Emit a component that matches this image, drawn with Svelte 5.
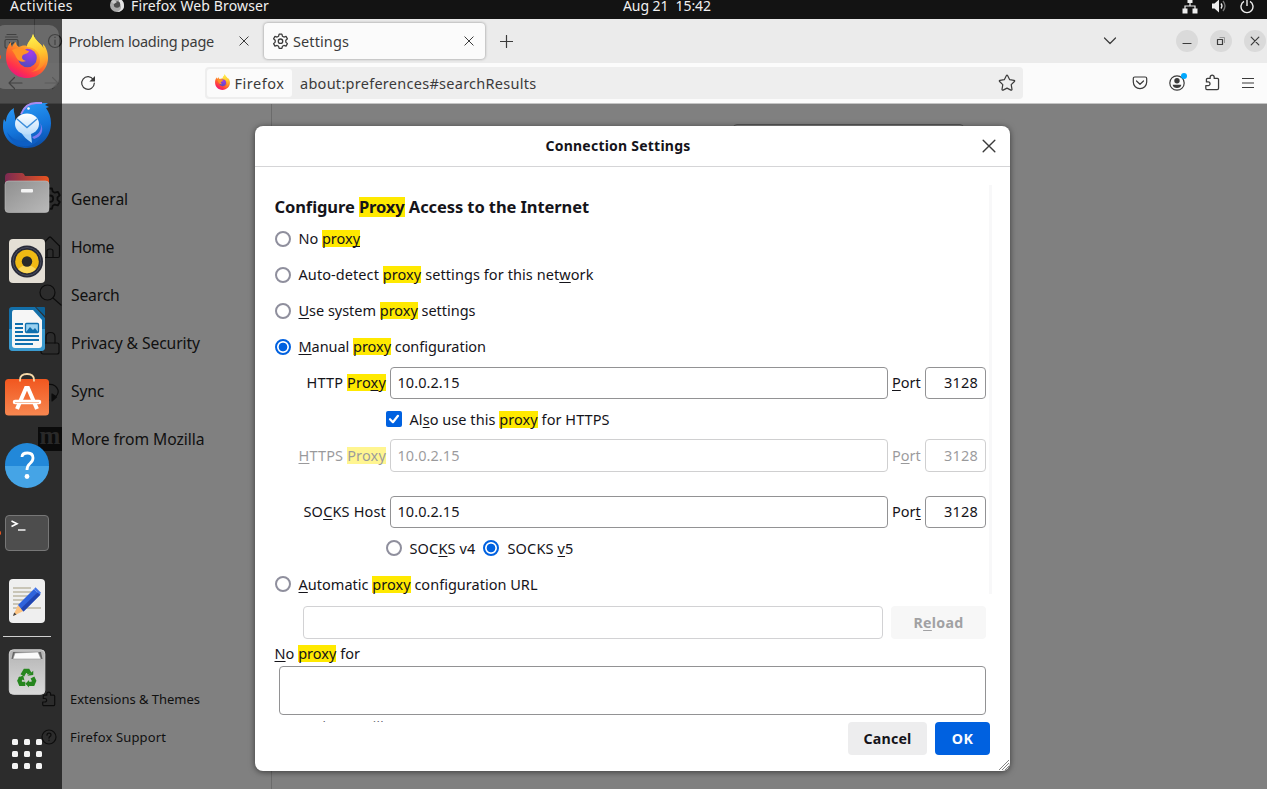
<script>
  // Spreads a label evenly over the width reserved for it.
  function fit(node, width) {
    const natural = node.getBoundingClientRect().width;
    node.style.letterSpacing = (width - natural) / node.textContent.length + 'px';
  }

  const nav = [
    { label: 'General', width: 57, icon: 'gear' },
    { label: 'Home', width: 43, icon: 'home' },
    { label: 'Search', width: 48.5, icon: 'search' },
    { label: 'Privacy & Security', width: 129, icon: 'lock' },
    { label: 'Sync', width: 33, icon: 'sync' },
    { label: 'More from Mozilla', width: 133.5, icon: 'mozilla' }
  ];
  const dots = [13, 25, 37];
</script>

{#snippet firefox(size)}
  <svg width={size} height={size} viewBox="0 0 48 48">
    <defs>
      <linearGradient id="fxBody" x1=".8" y1="0" x2=".25" y2="1">
        <stop offset="0" stop-color="#fff04a" /><stop offset=".3" stop-color="#ffb52e" />
        <stop offset=".58" stop-color="#ff6a2b" /><stop offset=".82" stop-color="#ff2f4e" /><stop offset="1" stop-color="#e31587" />
      </linearGradient>
      <linearGradient id="fxFlame" x1=".5" y1="0" x2=".6" y2="1">
        <stop offset="0" stop-color="#fff44f" /><stop offset=".5" stop-color="#ffc42e" /><stop offset="1" stop-color="#ff7a25" />
      </linearGradient>
      <radialGradient id="fxGlobe" cx=".65" cy=".2" r=".9">
        <stop offset="0" stop-color="#a53bea" /><stop offset=".5" stop-color="#7543d8" /><stop offset="1" stop-color="#4a4fb5" />
      </radialGradient>
    </defs>
    <path fill="url(#fxBody)" d="M30 1c-1 5-5 8-6 12-3-1-6 0-8 1-2-1-3-3-3-5-2 1-3 3-4 5-1-1-1-3-1-5C4 13 3 18 3 24c0 12 9 21 21 21s21-9 21-20c0-6-2-11-5-14 0 2 0 3 1 5-3-6-9-8-11-15z" />
    <path fill="url(#fxFlame)" d="M30 1c-1 5-6 8-6 13 7 0 13 5 13 13 0 6-4 10-9 12 10-1 15-8 15-15 0-4-1-7-2-8-3-6-9-8-11-15z" />
    <circle cx="24.500" cy="25" r="9.300" fill="url(#fxGlobe)" />
    <path fill="#ff9327" d="M9 17c4-2 9-3 13-1 1 1 2 2 4 2 0 2-4 3-6 4-2 2-1 5 3 6-4 2-8 0-10-4-1-3-3-5-4-7z" />
  </svg>
{/snippet}

{#snippet gear(size)}
  <svg width={size} height={size} viewBox="0 0 16 16" class="line">
    <path d="M6.700 1h2.600l.5 2 1.400.8 2-.6 1.300 2.300-1.500 1.400v1.700l1.500 1.400-1.300 2.300-2-.6-1.400.8-.5 2H6.700l-.5-2-1.400-.8-2 .6L1.500 10 3 8.600V6.900L1.500 5.500l1.300-2.300 2 .6L6.200 3z" />
    <circle cx="8" cy="7.750" r="2.100" />
  </svg>
{/snippet}

{#snippet puzzle(size)}
  <svg width={size} height={size} viewBox="0 0 16 16" class="line">
    <path d="M2.600 14.700h9.800q1.300 0 1.300-1.300V5.200q0-1-1-1H9.600V3a1.900 1.900 0 0 0-3.800 0v1.200H3.300q-1 0-1 1v2.300h1.600a1.700 1.700 0 0 1 0 3.500H1.700v2.500q0 1.200 1 1.200z" />
  </svg>
{/snippet}

{#snippet close(size)}
  <svg width={size} height={size} viewBox="0 0 12 12" class="line"><path d="M1 1l10 10M11 1L1 11" /></svg>
{/snippet}

<div class="screen">
  <header class="topbar">
    <span use:fit={63}>Activities</span>
    <svg class="app" width="16" height="16" viewBox="0 0 16 16">
      <circle cx="8" cy="8" r="7" fill="#aaa" /><path d="M10 1c3 2 5 4 5 8s-4 6-7 6c5-2 5-6 2-9z" fill="#e3e3e3" /><circle cx="8" cy="7.500" r="3.200" fill="#4d4d4d" /><path d="M2 4l3-1 3 2-3 2z" fill="#c9c9c9" />
    </svg>
    <span use:fit={138}>Firefox Web Browser</span>
    <span class="clock" use:fit={88}>Aug 21&nbsp; 15:42</span>
    <svg class="net" width="16" height="16" viewBox="0 0 16 16" fill="#eee"><path d="M5.500 0h5v5h-5zM.5 10.500h5v5h-5zM10.500 10.500h5v5h-5z" /><path d="M8 4v4M3 11V8h10v3" fill="none" stroke="#eee" stroke-width="1.200" /></svg>
    <svg class="vol" width="16" height="16" viewBox="0 0 16 16" fill="#eee"><path d="M1 5.500h2.500L8 1.500v13l-4.500-4H1z" /><path d="M10 5.500q2 2.500 0 5" fill="none" stroke="#eee" stroke-width="1.300" /><path d="M12 3q4 5 0 10" fill="none" stroke="#777" stroke-width="1.300" /></svg>
    <svg class="pow" width="16" height="16" viewBox="0 0 16 16" fill="none" stroke="#eee" stroke-width="1.400"><path d="M5 3.400a6 6 0 1 0 6 0M8 1v7" /></svg>
  </header>

  <section class="tabs">
    <svg class="view" width="17" height="16" viewBox="0 0 17 16"><g class="line"><path d="M4 1.500h9M2.500 4h12" /><rect x="2" y="6.500" width="13" height="8.500" rx="1.500" /><path d="M6.500 9.500l2 2 2-2" /></g></svg>
    <i class="sep"></i>
    <svg class="info" width="16" height="16" viewBox="0 0 16 16"><g class="line"><circle cx="8" cy="8" r="6.500" /><path d="M8 7v4.500M8 4v.5" /></g></svg>
    <span class="title" use:fit={145.5}>Problem loading page</span>
    <span class="x">{@render close(10)}</span>
    <div class="tab">
      {@render gear(17)}
      <span use:fit={56}>Settings</span>
      <span class="x">{@render close(10)}</span>
    </div>
    <svg class="plus" width="13" height="13" viewBox="0 0 13 13"><path class="line" d="M6.500 .5v12M.5 6.500h12" /></svg>
    <svg class="chev" width="14" height="8" viewBox="0 0 14 8"><path class="line" d="M1.500 1L7 6.500 12.500 1" /></svg>
    <div class="wins">
      <span><svg width="10" height="10" viewBox="0 0 10 10"><path class="line" d="M1 7.500h8" /></svg></span>
      <span><svg width="10" height="10" viewBox="0 0 10 10"><path d="M3.500 1.500H8.500V7" fill="none" stroke="#999" /><rect class="line" x="1.500" y="3.500" width="5" height="5" /></svg></span>
      <span><svg width="10" height="10" viewBox="0 0 10 10"><path class="line" d="M1.200 1.200l7.600 7.600M8.800 1.200L1.200 8.800" /></svg></span>
    </div>
  </section>

  <section class="toolbar">
    <svg class="back" width="15" height="14" viewBox="0 0 15 14"><path class="line" d="M14 7H1M6.500 1.500L1 7l5.500 5.500" /></svg>
    <svg class="fwd" width="15" height="14" viewBox="0 0 15 14" opacity=".4"><path class="line" d="M1 7h13M8.500 1.500L14 7l-5.500 5.500" /></svg>
    <svg class="reload" width="16" height="16" viewBox="0 0 16 16"><path class="line" d="M13.300 4.600A6.300 6.300 0 1 0 14.300 8.200" /><path d="M15 1v5.600H9.400z" fill="#3b3b3b" /></svg>
    <div class="url">
      <div class="ident">{@render firefox(17)}<span use:fit={50}>Firefox</span></div>
      <span class="addr" use:fit={236.5}>about:preferences#searchResults</span>
      <svg class="star" width="18" height="18" viewBox="0 0 18 18"><path class="line" d="M8.300 1.700q.7-1.200 1.400 0l2 4 4.300.6q1.200.3.400 1.200L13.200 10.700l.8 4.600q0 1.200-1.100.8L9 14.100l-3.900 2q-1.100.4-1.100-.8l.8-4.600L1.600 7.500q-.8-.9.400-1.200l4.300-.6z" /></svg>
    </div>
    <svg class="pocket" width="16" height="16" viewBox="0 0 16 16"><g class="line"><path d="M2.800 2h10.400q1.500 0 1.500 1.500V7a6.700 6.700 0 0 1-13.400 0V3.500Q1.300 2 2.800 2z" /><path d="M4.500 6L8 9.300 11.500 6" /></g></svg>
    <div class="acct">
      <svg width="16" height="16" viewBox="0 0 16 16"><circle class="line" cx="8" cy="8" r="7.200" /><circle cx="8" cy="5.700" r="2.700" fill="#3b3b3b" /><path d="M3.700 9.800h8.600q-.5 3.200-4.300 3.200t-4.300-3.200z" fill="#3b3b3b" /></svg>
      <i></i>
    </div>
    <span class="ext">{@render puzzle(17)}</span>
    <svg class="menu" width="12" height="12" viewBox="0 0 12 12"><path class="line" d="M0 1.500h12M0 6h12M0 10.500h12" /></svg>
  </section>

  <main>
    <aside>
      <ul class="nav">
        {#each nav as item}
          <li>
            {#if item.icon === 'gear'}
              {@render gear(24)}
            {:else if item.icon === 'mozilla'}
              <b class="moz">m</b>
            {:else}
              <svg width="24" height="24" viewBox="0 0 24 24"><g class="line">
                {#if item.icon === 'home'}<path d="M3 11l8-8.500q1-1 2 0l8.500 8.500M4.500 10v11q0 1.500 1.500 1.500h14q1.500 0 1.500-1.500V10.500M9 22v-6q0-2 3-2t3 2v6" />
                {:else if item.icon === 'search'}<circle cx="9.500" cy="9.500" r="7.500" /><path d="M15 15l8 7" />
                {:else if item.icon === 'lock'}<rect x="3" y="12" width="18" height="11" rx="2" /><path d="M8 12V6q0-4.500 4.500-4.500T17 6v6" />
                {:else}<path d="M3 12a9 9 0 0 1 17-1q1 4-3 7M3 16q3 5 8 5" /><path d="M14 15v7l4.500-4z" fill="#111" />{/if}
              </g></svg>
            {/if}
            <span use:fit={item.width}>{item.label}</span>
          </li>
        {/each}
      </ul>
      <ul class="more">
        <li>{@render puzzle(16)}<span use:fit={130}>Extensions &amp; Themes</span></li>
        <li><svg width="16" height="16" viewBox="0 0 16 16"><g class="line"><circle cx="8" cy="8" r="7" /><path d="M6 6.200q0-2 2-2t2 1.800q0 1-1.200 1.600Q8 8 8 9.200M8 11v.6" /></g></svg><span use:fit={96}>Firefox Support</span></li>
      </ul>
    </aside>
    <div class="pane"><div class="find"></div></div>
  </main>

  <nav class="dock">
    <div class="cell active">{@render firefox(48)}</div>
    <div class="cell">
      <svg width="48" height="48" viewBox="0 0 48 48">
        <defs>
          <linearGradient id="tb" x1=".3" y1="0" x2=".6" y2="1"><stop offset="0" stop-color="#2a9af5" /><stop offset=".6" stop-color="#1373d9" /><stop offset="1" stop-color="#0b4ea8" /></linearGradient>
          <linearGradient id="env" x1="0" y1="0" x2="0" y2="1"><stop offset="0" stop-color="#fff" /><stop offset="1" stop-color="#b9dcfa" /></linearGradient>
        </defs>
        <path fill="url(#tb)" d="M18 13C20 5 27 1 33 2h12l-3 2 4 2-3 1c3 4 5 9 5 15 0 14-10 25-24 25S1 38 0 27c0-4 0-6 1-9l2 3c0-6 3-11 8-14-1 4 2 8 1 12z" />
        <path fill="none" stroke="#a98bf0" stroke-width="1.800" d="M18 13C21 6 26 2 33 2h6" />
        <path fill="#0d5ec4" d="M4 31c8 12 25 13 37 0-5 11-13 15-21 14S6 38 4 31z" />
        <path fill="#7b7bf0" d="M29 36c7-2 11-8 8-14 5 7 1 14-6 16z" />
        <path d="M18 31q3 6 11 11l-1-9z" fill="#a9d4fa" />
        <ellipse cx="24" cy="23" rx="12" ry="10.500" fill="url(#env)" />
        <path fill="none" stroke="#3c8edb" stroke-width="1.400" d="M14 18l10 8.500 10-8.500" />
        <circle cx="25.500" cy="7.500" r="1.300" fill="#fff" />
      </svg>
    </div>
    <div class="cell">
      <svg width="48" height="48" viewBox="0 0 48 48">
        <defs>
          <linearGradient id="fold"><stop offset="0" stop-color="#7c2a52" /><stop offset="1" stop-color="#e9541f" /></linearGradient>
          <linearGradient id="grey" x2="1" y2="1"><stop offset="0" stop-color="#8f8f8f" /><stop offset="1" stop-color="#b9b9b9" /></linearGradient>
        </defs>
        <path fill="url(#fold)" d="M2 8q0-4 4-4h13q2 0 3 3h20q4 0 4 4v15H2z" />
        <rect x="2" y="12" width="44" height="31.500" rx="3.500" fill="url(#grey)" stroke="#c0c0c0" stroke-width=".6" />
        <rect x="18" y="20" width="12" height="3.500" rx="1" fill="#f4f4f4" />
      </svg>
    </div>
    <div class="cell">
      <svg width="48" height="48" viewBox="0 0 48 48">
        <rect x="6" y="2" width="36" height="44" rx="4" fill="#e4dfd5" />
        <circle cx="24" cy="24.500" r="16" fill="#282a38" /><circle cx="24" cy="24.500" r="14" fill="none" stroke="#4a4e5e" />
        <circle cx="24" cy="24.500" r="11.800" fill="#efb914" /><path d="M15 32a11.800 11.800 0 0 0 18 0l-9-6z" fill="#fbd75a" />
        <circle cx="24" cy="24.500" r="5.200" fill="#292929" />
      </svg>
    </div>
    <div class="cell">
      <svg width="48" height="48" viewBox="0 0 48 48">
        <path d="M9 2h23l10 11v29q0 4-4 4H10q-4 0-4-4V5q0-3 3-3z" fill="#136fa9" />
        <path d="M6 24h36v18q0 4-4 4H10q-4 0-4-4z" fill="#3b9bd0" />
        <path d="M11 5h19l9 10v25q0 3-3 3H12q-3 0-3-3V8q0-3 2-3z" fill="#f6f6f6" />
        <path d="M33 2h8q1 0 1 1v8z" fill="#0d6094" />
        <path d="M12 19h8M12 23h8M12 27h8M12 31h24M12 35h24M12 39h18" stroke="#0f6fae" stroke-width="1.800" />
        <rect x="22.500" y="18.500" width="13" height="9" rx="1" fill="#9ad1f0" stroke="#0f6fae" stroke-width="1.300" />
        <path d="M23 27l4-5 3 3 2-2 3 4z" fill="#0f6fae" />
      </svg>
    </div>
    <div class="cell">
      <svg width="48" height="48" viewBox="0 0 48 48">
        <defs><linearGradient id="bag" x2="0" y2="1"><stop offset="0" stop-color="#f1571f" /><stop offset="1" stop-color="#f78750" /></linearGradient></defs>
        <rect x="2" y="6" width="44" height="36.500" rx="3.500" fill="url(#bag)" />
        <path d="M17 8.500V7q0-6 7-6t7 6v1.500" fill="none" stroke="#f7d9a8" stroke-width="1.800" />
        <path d="M14 36l9-21h2l9 21" fill="none" stroke="#fff" stroke-width="4" />
        <path d="M12 29h24" stroke="#fff" stroke-width="4.500" stroke-linecap="round" /><path d="M12 29.500h24" stroke="#f7bea0" stroke-width="1" />
      </svg>
    </div>
    <div class="cell help">
      <svg width="48" height="48" viewBox="0 0 48 48">
        <circle cx="24" cy="24" r="22" fill="#2288d9" /><path d="M2 25h44a22 22 0 0 1-44 0z" fill="#45a4e6" />
        <path d="M19 16q0-4 5.500-4T30 17q0 3-3 5.500T24 29" fill="none" stroke="#fff" stroke-width="2.800" /><circle cx="24" cy="35.500" r="2.400" fill="#fff" />
      </svg>
    </div>
    <div class="cell term">
      <svg width="48" height="48" viewBox="0 0 48 48">
        <rect x="2.500" y="6.500" width="43" height="35" rx="3.500" fill="#4d4d4d" stroke="#777" />
        <path d="M8.500 12l5.500 2.800-5.500 2.700" fill="none" stroke="#fff" stroke-width="1.600" /><path d="M15 21h7.500" stroke="#fff" stroke-width="1.400" />
      </svg>
    </div>
    <div class="cell">
      <svg width="48" height="48" viewBox="0 0 48 48">
        <rect x="6" y="2" width="36" height="44" rx="4" fill="#efefef" />
        <path d="M10 11h18M10 15h22M10 19h20M10 23h16M10 27h12M10 31h28" stroke="#c9c5b7" stroke-width="2" />
        <path d="M10 39l5-11 5.500 6z" fill="#fcc381" /><path d="M10 39l1.200-3.500 2.300 2z" fill="#444" />
        <path d="M15 28L31 12l6 6-16.500 16.500z" fill="#2f63dc" /><path d="M18 31.500L35 15l2.500 2.500L20.500 34.500z" fill="#2044b0" /><path d="M31 12l1.500-1.800 5.500 5.500-1.300 1.800z" fill="#4173e6" />
      </svg>
    </div>
    <i class="rule"></i>
    <div class="cell trash">
      <svg width="48" height="48" viewBox="0 0 48 48">
        <defs><linearGradient id="bin" x2="0" y2="1"><stop offset="0" stop-color="#b4b4b4" /><stop offset="1" stop-color="#dadada" /></linearGradient></defs>
        <rect x="6.300" y="1.800" width="35.500" height="44.500" rx="4" fill="url(#bin)" stroke="#d6d6d6" />
        <path d="M10 4h28l1.500 7h-31z" fill="#666" /><path d="M12 5l23-1 3 7H10z" fill="#fafafa" stroke="#999" stroke-width=".6" />
        <g transform="translate(3.400 6) scale(.84)">
          <g fill="none" stroke="#26861e" stroke-width="5"><path d="M19 25.500l3.200-5.500h3.500l2 3.500" /><path d="M31 28l2 4-1.500 3.500H26" /><path d="M22.500 35.500H17L15.500 32l2-4" /></g>
          <g fill="#26861e"><path d="M25 26l7-1v-5z" /><path d="M27 31v9l-4.500-4.500z" /><path d="M14 28l6-2.500 1.500 6z" /></g>
        </g>
      </svg>
    </div>
    <div class="cell apps">
      <svg width="48" height="48" viewBox="0 0 48 48">
        {#each dots as y}{#each dots as x}<rect x={x - 4} y={y - 4} width="6" height="6" rx="1.500" fill="#f4f4f4" />{/each}{/each}
      </svg>
    </div>
  </nav>

  <div class="dialog">
    <header><b use:fit={145}>Connection Settings</b><span>{@render close(14)}</span></header>
    <div class="body">
      <h2><span use:fit={314.5}>Configure <mark>Proxy</mark> Access to the Internet</span></h2>
      <label class="opt"><i class="radio"></i><span use:fit={61.5}>No <mark>prox<u>y</u></mark></span></label>
      <label class="opt"><i class="radio"></i><span use:fit={295}>Auto-detect <mark>proxy</mark> settings for this net<u>w</u>ork</span></label>
      <label class="opt"><i class="radio"></i><span use:fit={177}><u>U</u>se system <mark>proxy</mark> settings</span></label>
      <label class="opt"><i class="radio on"></i><span use:fit={187.5}><u>M</u>anual <mark>proxy</mark> configuration</span></label>
      <div class="row http">
        <span class="name"><span use:fit={79.5}>HTTP <mark>Pro<u>x</u>y</mark></span></span>
        <div class="box host"><span use:fit={62}>10.0.2.15</span></div>
        <span class="port" use:fit={29}><u>P</u>ort</span>
        <div class="box num"><span use:fit={34}>3128</span></div>
      </div>
      <label class="opt sub tall"><i class="check"><svg width="16" height="16" viewBox="0 0 16 16"><path d="M4 8.200l2.900 3L12 4.800" fill="none" stroke="#fff" stroke-width="2.200" stroke-linecap="round" stroke-linejoin="round" /></svg></i><span use:fit={200}>Al<u>s</u>o use this <mark>proxy</mark> for HTTPS</span></label>
      <div class="row https off">
        <span class="name"><span use:fit={87.5}><u>H</u>TTPS <mark>Proxy</mark></span></span>
        <div class="box host"><span use:fit={62}>10.0.2.15</span></div>
        <span class="port" use:fit={29}>P<u>o</u>rt</span>
        <div class="box num"><span use:fit={34}>3128</span></div>
      </div>
      <div class="row socks">
        <span class="name"><span use:fit={82.5}>SO<u>C</u>KS Host</span></span>
        <div class="box host"><span use:fit={62}>10.0.2.15</span></div>
        <span class="port" use:fit={29}>Por<u>t</u></span>
        <div class="box num"><span use:fit={34}>3128</span></div>
      </div>
      <div class="opt sub tall">
        <i class="radio"></i><span use:fit={66}>SOC<u>K</u>S v4</span>
        <i class="radio on second"></i><span class="v5" use:fit={66}>SOCKS <u>v</u>5</span>
      </div>
      <label class="opt auto"><i class="radio"></i><span use:fit={239}><u>A</u>utomatic <mark>proxy</mark> configuration URL</span></label>
      <div class="pac"><div class="box dim"></div><button class="reloadbtn" disabled><span use:fit={50}>R<u>e</u>load</span></button></div>
      <div class="except"><span use:fit={85.5}><u>N</u>o <mark>proxy</mark> for</span></div>
      <div class="box area"></div>
      <p class="hint"><span use:fit={293}>Example: .mozilla.org, .net.nz, 192.168.1.0/24</span></p>
      <i class="scroll"></i>
    </div>
    <footer><button><span use:fit={48}>Cancel</span></button><button class="ok"><span use:fit={21.5}>OK</span></button></footer>
    <svg class="grip" width="12" height="12" viewBox="0 0 12 12" stroke="#777" stroke-width=".9"><path d="M1 11L11 1M4 11l7-7M7 11l4-4M9.500 11.500l2-2" /></svg>
  </div>
</div>

<style>
  :global(body) { overflow: hidden; }
  * { box-sizing: border-box; }
  .screen { position: relative; display: flex; flex-direction: column; width: 1267px; height: 789px; overflow: hidden; background: #808080; font: 14.5px/20px 'Noto Sans', 'Open Sans', sans-serif; color: #15141a; }
  .screen span, b { white-space: pre; }
  svg { flex: none; display: block; }
  .line { fill: none; stroke: #3b3b3b; stroke-width: 1.2; stroke-linejoin: round; stroke-linecap: round; }
  ul { list-style: none; margin: 0; padding: 0; }

  .topbar { display: flex; align-items: center; height: 19px; padding: 0 12px 8px 10px; background: #131313; color: #f0f0f0; font-size: 14px; line-height: 11px; }
  .app { margin: -2px 5px 0 36px; }
  .app + span { margin-left: 1px; }
  .clock { margin-left: 354px; }
  .net { margin-left: auto; }
  .vol { margin-left: 13px; }
  .pow { margin-left: 12px; }

  .tabs { display: flex; align-items: center; height: 44px; padding-left: 3px; background: #ebebeb; color: #3b3b3b; }
  .sep { width: 1px; height: 44px; margin: 0 12px 0 14px; background: #aaa; }
  .title { margin-left: 5.5px; }
  .x { display: flex; margin-left: 24.5px; }
  .tab { display: flex; align-items: center; width: 221px; height: 36px; margin-left: 15.5px; padding-left: 7.5px; border-radius: 4px; background: #fbfbfb; box-shadow: 0 0 3px rgba(0, 0, 0, .4); }
  .tab span:nth-of-type(1) { margin-left: 4.5px; }
  .tab .x { margin: 0 11.5px 0 auto; }
  .plus { margin-left: 15px; }
  .chev { margin-left: auto; }
  .wins { display: flex; gap: 12px; margin: 0 1px 0 59px; }
  .wins span { display: grid; place-items: center; width: 22px; height: 22px; border-radius: 50%; background: #dadada; }

  .toolbar { display: flex; align-items: center; height: 41px; padding: 0 13px 1px 8px; background: #fbfbfb; border-bottom: 1px solid #c4c4c4; color: #3b3b3b; }
  .fwd { margin-left: 21px; }
  .reload { margin-left: 21px; }
  .url { display: flex; align-items: center; width: 818px; height: 32px; margin-left: 109px; padding-left: 2px; border-radius: 4px; background: #eee; }
  .ident { display: flex; align-items: center; gap: 3.5px; width: 85px; height: 28px; padding-left: 7px; border-radius: 3px; background: #fbfbfb; }
  .addr { margin-left: 8px; }
  .star { margin: 0 7px 0 auto; }
  .pocket { margin-left: 109px; }
  .acct { position: relative; margin-left: 21px; }
  .acct i { position: absolute; right: -2px; top: -2px; width: 6px; height: 6px; border-radius: 50%; background: #00a8ff; }
  .ext { margin-left: 19px; }
  .menu { margin-left: auto; }

  main { display: flex; flex: 1; min-height: 0; }
  main .line, aside :global(.line) { stroke: #111; }
  aside { display: flex; flex-direction: column; justify-content: space-between; width: 272px; padding: 71px 0 33px 38px; border-right: 1px solid #6b6b6b; }
  .nav li { display: flex; align-items: center; gap: 9px; height: 48px; font-size: 15.7px; color: #101010; }
  .more li { display: flex; align-items: center; gap: 13px; height: 38px; padding-left: 3px; font-size: 13px; color: #101010; }
  .moz { width: 24px; height: 24px; background: #0c0c0c; color: #777; font: bold 25px/18px 'Liberation Serif', serif; text-align: center; }
  .pane { flex: 1; padding: 20px 0 0 461px; }
  .find { width: 231px; height: 32px; border: 1px solid #555; border-radius: 4px; }

  .dock { position: absolute; left: 0; top: 19px; width: 62px; height: 770px; padding-top: 4px; background: rgba(11, 11, 11, .72); }
  .cell { position: relative; display: grid; place-items: center; width: 54px; height: 68px; }
  .cell :global(svg) { position: relative; }
  .active::before { content: ''; position: absolute; left: -5px; top: 2px; width: 64px; height: 64px; border-radius: 10px; background: rgba(255, 255, 255, .18); }
  .active::after, .term::after { content: ''; position: absolute; left: -2px; top: 32px; width: 3px; height: 4px; border-radius: 2px; background: #e95420; }
  .help { padding-bottom: 1px; }
  .rule { display: block; width: 48px; height: 1px; margin: 1px 3px; background: #d0d0d0; }
  .apps { margin-top: 14px; }

  .dialog { position: absolute; left: 255px; top: 126px; width: 755px; height: 645px; display: flex; flex-direction: column; border-radius: 8px; background: #fff; box-shadow: 0 1px 6px rgba(0, 0, 0, .55); }
  .dialog header { position: relative; display: flex; align-items: center; height: 41px; padding-left: 290.5px; border-bottom: 1px solid #d5d5d7; font-size: 14px; }
  .dialog header span { margin: 0 14px 0 auto; }
  .body { position: relative; height: 555px; padding: 29px 24px 0 20px; overflow: hidden; }
  h2 { height: 25px; margin: 0; font-size: 16.5px; line-height: 21px; }
  h2 span { margin-left: -.5px; }
  mark { display: inline-block; height: 17px; line-height: 17px; background: #ffe900; color: inherit; }
  h2 mark { height: 20px; line-height: 20px; }
  u { text-decoration-thickness: 1px; text-underline-offset: 2px; text-decoration-skip-ink: none; }
  .opt { display: flex; align-items: center; height: 36px; }
  .opt span { margin: -2px 0 0 7.5px; }
  .radio { width: 16px; height: 16px; border: 2px solid #8f8f9d; border-radius: 50%; background: #fff; }
  .radio.on { border-color: #0061e0; background: radial-gradient(circle, #0061e0 4px, #fff 4.7px); }
  .check { width: 16px; height: 16px; border-radius: 2px; background: #0061e0; }
  .sub { padding-left: 111px; }
  .tall { height: 40px; }
  .opt.tall span, .opt.auto span { margin-top: 0; }
  .opt span.v5 { margin-left: 8.5px; }
  .radio.second { margin-left: 7.5px; }
  .row { display: flex; height: 32px; align-items: center; }
  .row span { line-height: 18px; }
  .row > span, .row .box > span { margin-top: -2px; }
  .http { margin-top: 2px; }
  .https { height: 33px; }
  .socks { margin-top: 24px; }
  .name { display: flex; justify-content: flex-end; width: 111px; margin-right: 4px; }
  .box { display: flex; align-items: center; height: 100%; border: 1px solid #929294; border-radius: 4px; padding: 0 6.5px; }
  .host { width: 498px; }
  .port { width: 29px; margin: 0 4px; }
  .num { width: 61px; justify-content: flex-end; padding-right: 7px; }
  .off { opacity: .43; }
  .auto { height: 32px; }
  .pac { display: flex; gap: 8px; height: 33px; margin: 6px 0 0 28px; }
  .dim { width: 580px; border-color: #d2d2d4; }
  button { display: grid; place-items: center; height: 33px; padding: 0; border: 0; border-radius: 4px; background: #ededee; color: #15141a; font: bold 14.2px/20px 'Noto Sans', sans-serif; }
  .reloadbtn { width: 95px; background: #f7f7f7; color: #a1a1a3; }
  .except { height: 27px; padding-top: 4px; }
  .except span { margin-left: -.5px; }
  .area { width: 707px; height: 49px; margin-left: 4px; }
  .hint { margin: 1px 0 0 4px; font-size: 13px; color: #5b5b66; }
  .scroll { position: absolute; right: 18px; top: 18px; width: 3px; height: 409px; background: #f8f8f9; }
  footer { display: flex; justify-content: flex-end; gap: 8px; padding-right: 20px; }
  footer button { width: 79px; }
  footer .ok { width: 55px; background: #0061e0; color: #fbfbfe; }
  .grip { position: absolute; right: 0; bottom: 0; }
</style>
